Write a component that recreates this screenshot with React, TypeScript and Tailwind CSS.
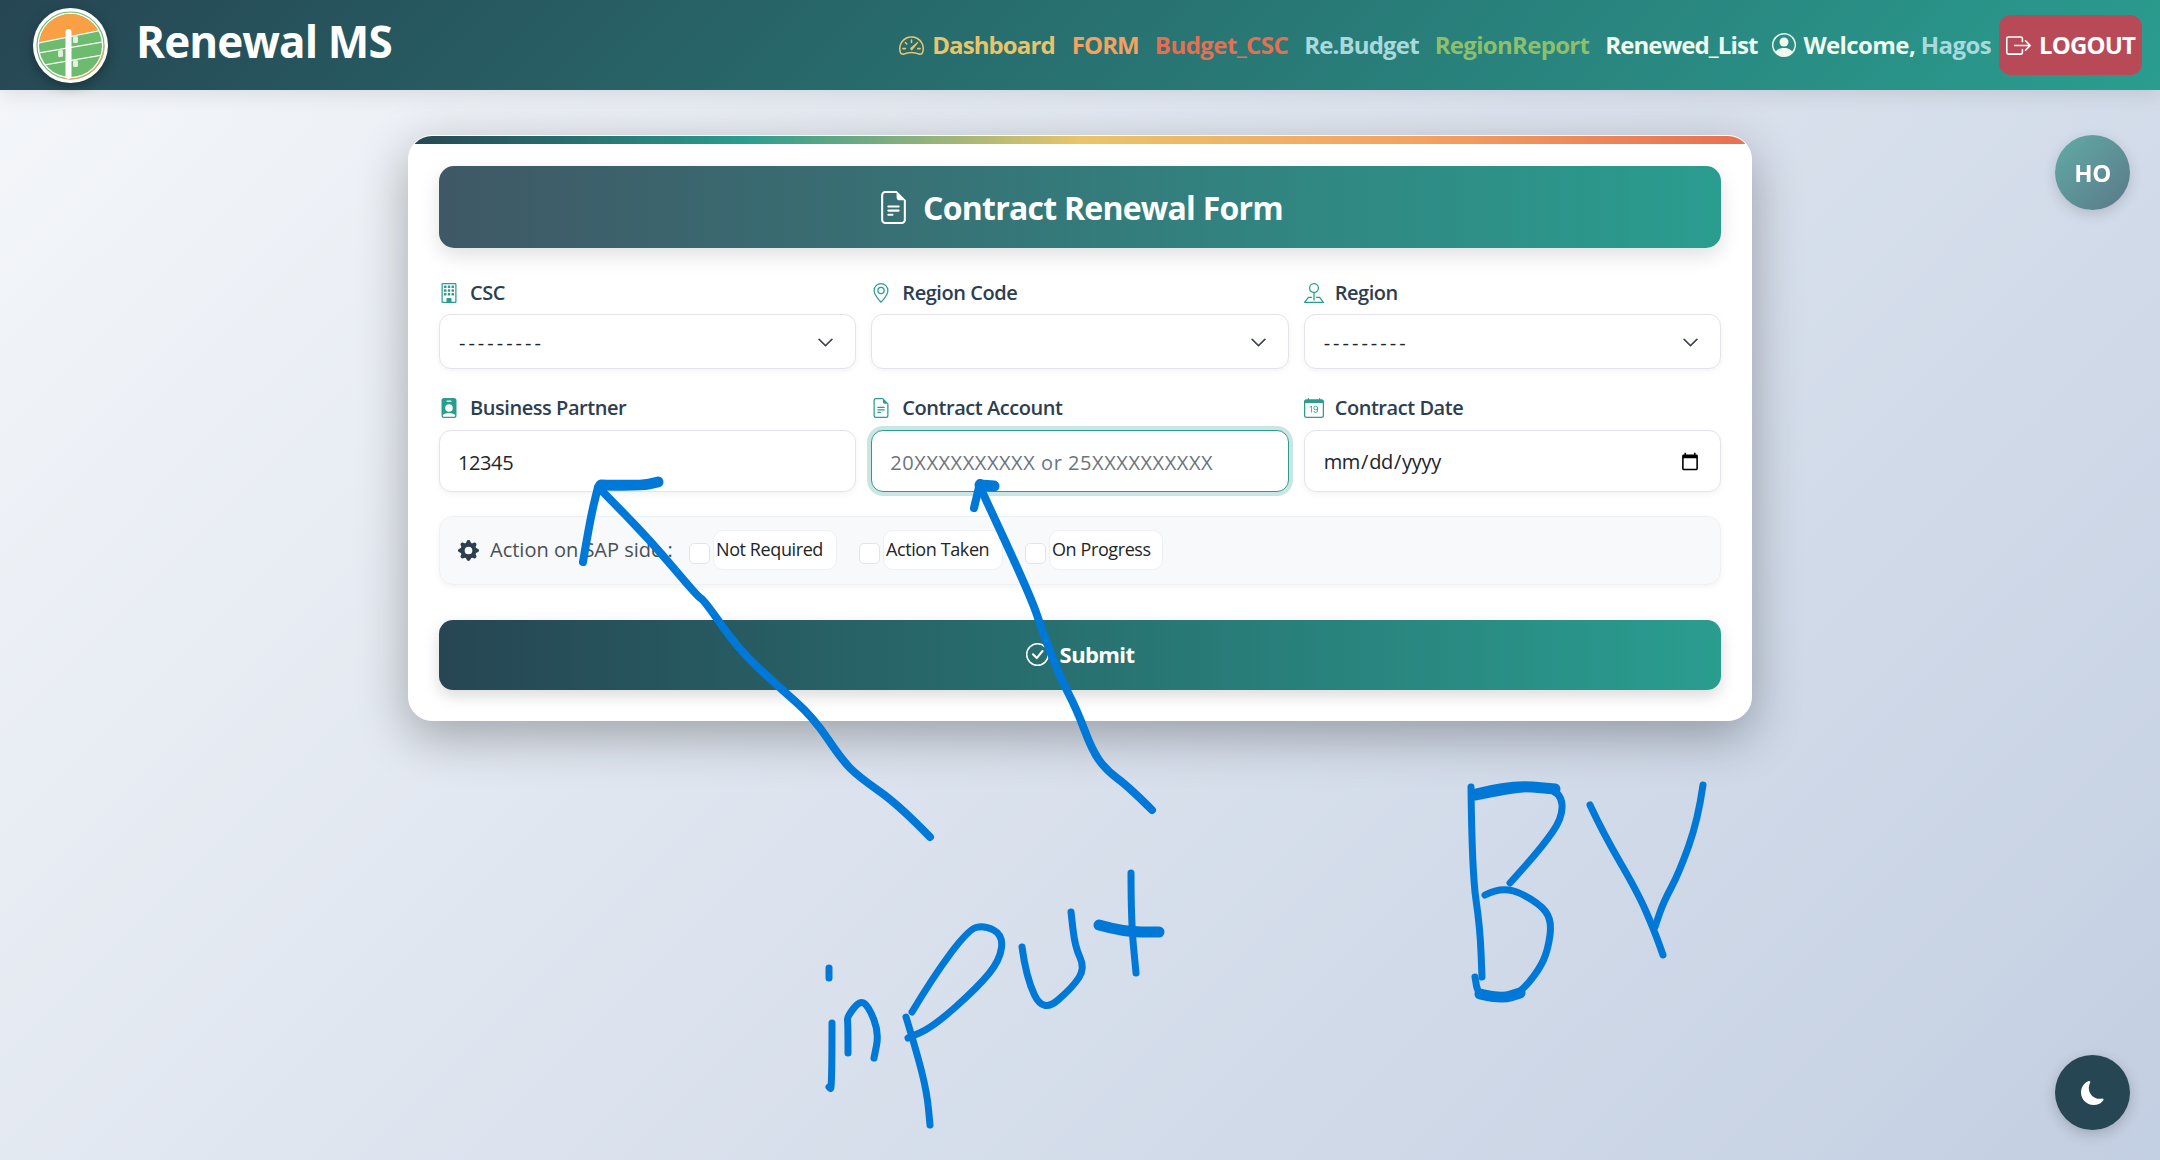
import {
  BsBoxArrowRight,
  BsBuilding,
  BsCalendarDate,
  BsCheckCircle,
  BsChevronDown,
  BsFileEarmarkText,
  BsGearFill,
  BsGeoAlt,
  BsMoonFill,
  BsPersonBadgeFill,
  BsPersonCircle,
  BsPinMap,
  BsSpeedometer2,
} from "react-icons/bs";

type Point = [number, number];

// Marker strokes scribbled over the screenshot, in page pixels.
const thickStrokes: Point[][] = [
  [[930, 837], [899, 805], [859, 777], [842, 760], [813, 717], [779, 687], [739, 650], [704, 600], [698, 597], [650, 540], [601, 490]],
  [[583, 562], [590, 520], [598, 487]],
  [[1152, 810], [1129, 787], [1106, 770], [1092, 750], [1077, 710], [1060, 677], [1043, 633], [1031, 597], [980, 487]],
  [[974, 508], [980, 483]],
];

const headStrokes: Point[][] = [
  [[601, 485], [640, 486], [658, 482]],
  [[980, 485], [994, 486]],
  [[1099, 925], [1124, 932], [1159, 932]],
  [[1476, 794], [1510, 785], [1555, 789]],
  [[1480, 994], [1501, 999], [1520, 993]],
];

const thinStrokes: Point[][] = [
  [[829, 968], [829, 978]],
  [[832, 1023], [832, 1090], [829, 1087]],
  [[848, 1053], [848, 1023], [847, 1017], [860, 1000], [869, 1007], [879, 1033], [874, 1058]],
  [[906, 1017], [917, 1053], [927, 1093], [930, 1125]],
  [[912, 1012], [933, 977], [968, 930], [984, 925], [1003, 935], [1000, 960], [978, 987], [933, 1027], [908, 1038]],
  [[1022, 947], [1026, 977], [1043, 1013], [1073, 987], [1085, 968], [1075, 947], [1071, 912]],
  [[1131, 873], [1131, 920], [1136, 973]],
  [[1471, 787], [1472, 873], [1480, 927], [1482, 977]],
  [[1475, 797], [1533, 785], [1561, 792], [1563, 817], [1542, 847], [1510, 883]],
  [[1485, 895], [1504, 885], [1539, 903], [1552, 920], [1548, 950], [1539, 970], [1520, 993], [1501, 1000], [1478, 995], [1475, 977]],
  [[1590, 805], [1603, 833], [1638, 893], [1654, 930], [1663, 955]],
  [[1703, 785], [1698, 820], [1679, 873], [1663, 903], [1655, 927]],
];

/** Quadratic segments through the midpoints, so the marker lines stay round. */
function smoothPath(points: Point[]) {
  let d = `M${points[0][0]} ${points[0][1]}`;
  for (let i = 1; i < points.length - 1; i++) {
    const [x, y] = points[i];
    const [nx, ny] = points[i + 1];
    d += ` Q${x} ${y} ${(x + nx) / 2} ${(y + ny) / 2}`;
  }
  const last = points[points.length - 1];
  return `${d} L${last[0]} ${last[1]}`;
}

function Scribbles() {
  const groups: [Point[][], number][] = [
    [thickStrokes, 8],
    [headStrokes, 11],
    [thinStrokes, 7],
  ];
  return (
    <svg
      className="absolute left-0 top-0 z-20 pointer-events-none"
      width="2160"
      height="1160"
      fill="none"
      stroke="#0078d7"
      strokeLinecap="round"
      strokeLinejoin="round"
    >
      {groups.map(([strokes, width]) =>
        strokes.map((s, i) => <path key={`${width}-${i}`} d={smoothPath(s)} strokeWidth={width} />)
      )}
    </svg>
  );
}

function Logo() {
  return (
    <svg width="75" height="75" viewBox="0 0 75 75" className="shrink-0 drop-shadow-[0_4px_6px_rgba(0,0,0,0.3)]">
      <circle cx="37.5" cy="37.5" r="37.5" fill="#fff" />
      <circle cx="37.5" cy="37.5" r="33.5" fill="#fff" stroke="#6dbb6e" strokeWidth="1.2" />
      <path d="M71 37.5 A33.5 33.5 0 0 1 30 70" fill="none" stroke="#e6a75c" strokeWidth="1.2" />
      <clipPath id="logo-disc">
        <circle cx="37.5" cy="37.5" r="31.5" />
      </clipPath>
      <g clipPath="url(#logo-disc)">
        <rect width="75" height="75" fill="#6dbb6e" />
        <path d="M0 36 L75 20 V0 H0 Z" fill="#f8a043" />
        <path d="M5 35 L70 22 M5 45 L70 34 M5 58 L70 47" stroke="#fff" strokeWidth="1.2" />
      </g>
      <rect x="32.5" y="21" width="6" height="50" rx="3" fill="#fff" />
      <rect x="40" y="28" width="5" height="7" rx="1.5" fill="#e4efe2" />
      <rect x="25" y="42" width="5" height="7" rx="1.5" fill="#e4efe2" />
      <rect x="40" y="52" width="5" height="7" rx="1.5" fill="#e4efe2" />
    </svg>
  );
}

function Navbar() {
  return (
    <nav className="flex h-[90px] items-center justify-between bg-[linear-gradient(135deg,#264653,#2a9d8f)] pl-[33px] pr-[18px] shadow-[0_4px_20px_rgba(0,0,0,0.1)]">
      <div className="flex items-center gap-[28px]">
        <Logo />
        <span className="-mt-[8px] text-[44px] font-bold leading-none tracking-[-0.9px] text-white">Renewal MS</span>
      </div>
      <div className="flex items-center text-[24px] font-bold tracking-[-0.9px]">
        <BsSpeedometer2 className="mr-[8px] text-[25px] text-[#e9c46a]" />
        <a className="mr-[17px] text-[#e9c46a]">Dashboard</a>
        <a className="mr-[16px] text-[#f4a261]">FORM</a>
        <a className="mr-[16px] tracking-[-0.55px] text-[#e76f51]">Budget_CSC</a>
        <a className="mr-[16px] tracking-[-0.85px] text-[#a8dadc]">Re.Budget</a>
        <a className="mr-[16px] tracking-[-0.7px] text-[#8ebf6c]">RegionReport</a>
        <a className="mr-[15px] text-[#f1faee]">Renewed_List</a>
        <BsPersonCircle className="mr-[7px] text-[24px] text-[#f1faee]" />
        <span className="mr-[8px] tracking-[-0.6px] text-[#f1faee]">
          Welcome, <span className="text-[#a8dadc]">Hagos</span>
        </span>
        <button
          type="button"
          className="flex h-[60px] w-[143px] items-center justify-center gap-[8px] rounded-[12px] bg-[#b84a57] font-bold text-white"
        >
          <BsBoxArrowRight className="text-[25px]" />
          LOGOUT
        </button>
      </div>
    </nav>
  );
}

function FieldLabel({ icon, text }: { icon: React.ReactNode; text: string }) {
  return (
    <label className="mb-[6px] flex h-[30px] items-center gap-[11px] text-[20px] font-semibold tracking-[-0.45px] text-[#2c3e50]">
      <span className="flex w-[20px] justify-center text-[20px] text-[#2a9d8f]">{icon}</span>
      {text}
    </label>
  );
}

function SelectField({ icon, label, value }: { icon: React.ReactNode; label: string; value: string }) {
  return (
    <div>
      <FieldLabel icon={icon} text={label} />
      <div className="relative">
        <select
          defaultValue={value}
          className="h-[55px] w-full appearance-none rounded-[12px] border border-[#e2e4e9] bg-white pl-[19px] pt-[3px] text-[20px] tracking-[3px] text-[#212529] shadow-[0_2px_6px_rgba(0,0,0,0.05)]"
        >
          <option value={value}>{value}</option>
        </select>
        <BsChevronDown className="pointer-events-none absolute right-[22px] top-[20px] stroke-[0.6px] text-[17px] text-[#343a40]" />
      </div>
    </div>
  );
}

function CheckOption({ text, width }: { text: string; width: string }) {
  return (
    <div className="mr-[22px] flex items-center gap-[3px]">
      <input
        type="checkbox"
        className="mt-[8px] h-[21px] w-[21px] appearance-none rounded-[5px] border border-[#e2e4e9] bg-white"
      />
      <span
        className={`${width} flex h-[40px] items-center rounded-[10px] border border-[#eef0f3] bg-white pl-[2px] text-[18px] tracking-[-0.4px] text-[#212529]`}
      >
        {text}
      </span>
    </div>
  );
}

function ContractForm() {
  return (
    <div className="w-[1344px] overflow-hidden rounded-[24px] border border-white bg-white pb-[30px] shadow-[0_15px_50px_rgba(0,0,0,0.3)]">
      <div className="h-[8px] bg-[linear-gradient(90deg,#264653,#2a9d8f,#e9c46a,#f4a261,#e76f51)]" />
      <div className="px-[30px] pt-[22px]">
        <div className="flex h-[82px] items-center justify-center gap-[13px] rounded-[15px] bg-[linear-gradient(90deg,#3f5866,#2a9d8f)] pt-[1px] text-[32px] font-bold tracking-[-0.75px] text-white shadow-[0_8px_20px_rgba(0,0,0,0.12)]">
          <BsFileEarmarkText className="text-[33px]" />
          Contract Renewal Form
        </div>

        <div className="mt-[30px] grid grid-cols-3 gap-x-[15px] gap-y-[24px]">
          <SelectField icon={<BsBuilding />} label="CSC" value="---------" />
          <SelectField icon={<BsGeoAlt />} label="Region Code" value="" />
          <SelectField icon={<BsPinMap />} label="Region" value="---------" />

          <div>
            <FieldLabel icon={<BsPersonBadgeFill />} text="Business Partner" />
            <input
              defaultValue="12345"
              className="mt-px h-[62px] w-full rounded-[12px] border border-[#e2e4e9] bg-white px-[18px] pt-[2px] text-[20px] tracking-[-0.4px] text-[#212529] shadow-[0_2px_6px_rgba(0,0,0,0.05)]"
            />
          </div>
          <div>
            <FieldLabel icon={<BsFileEarmarkText />} text="Contract Account" />
            <input
              placeholder="20XXXXXXXXXX or 25XXXXXXXXXX"
              className="mt-px h-[62px] w-full rounded-[12px] border border-[#2a9d8f] bg-white px-[18px] pt-[2px] text-[20px] tracking-[0.55px] text-[#212529] shadow-[0_0_0_4px_rgba(42,157,143,0.25)] outline-none placeholder:text-[#6c757d]"
            />
          </div>
          <div>
            <FieldLabel icon={<BsCalendarDate />} text="Contract Date" />
            <input
              type="date"
              className="mt-px h-[62px] w-full rounded-[12px] border border-[#e2e4e9] bg-white px-[18px] pt-[2px] text-[20px] tracking-[-0.3px] text-[#212529] shadow-[0_2px_6px_rgba(0,0,0,0.05)]"
            />
          </div>
        </div>

        <div className="mt-[24px] flex h-[69px] items-center rounded-[14px] border border-[#eef1f4] bg-[#f8f9fa] pb-[2px] pl-[18px] shadow-[0_2px_6px_rgba(0,0,0,0.05)]">
          <BsGearFill className="mt-[2px] text-[21px] text-[#2c3e50]" />
          <span className="ml-[11px] mr-[17px] w-[182px] whitespace-nowrap text-[20px] text-[#495057]">
            Action on SAP side :
          </span>
          <CheckOption text="Not Required" width="w-[124px]" />
          <CheckOption text="Action Taken" width="w-[120px]" />
          <CheckOption text="On Progress" width="w-[114px]" />
        </div>

        <button
          type="button"
          className="mt-[35px] flex h-[70px] w-full items-center justify-center gap-[11px] rounded-[14px] bg-[linear-gradient(90deg,#264653,#2a9d8f)] pb-[2px] text-[22px] font-bold tracking-[-0.6px] text-white shadow-[0_6px_16px_rgba(0,0,0,0.15)]"
        >
          <BsCheckCircle className="text-[23px]" />
          Submit
        </button>
      </div>
    </div>
  );
}

export default function App() {
  return (
    <div className="relative h-[1160px] overflow-hidden bg-[linear-gradient(135deg,#f5f7fa,#c3cfe2)] font-['Open_Sans',sans-serif]">
      <Navbar />
      <main className="flex justify-center pt-[45px]">
        <ContractForm />
      </main>

      <div className="fixed left-[2055px] top-[135px] z-10 flex h-[75px] w-[75px] items-center justify-center rounded-full bg-[linear-gradient(135deg,#62aca6,#5a7888)] text-[24px] font-bold tracking-[-0.5px] text-white shadow-[0_4px_14px_rgba(0,0,0,0.15)]">
        HO
      </div>
      <button
        type="button"
        className="fixed left-[2055px] top-[1055px] z-10 flex h-[75px] w-[75px] items-center justify-center rounded-full bg-[#264653] text-[24px] text-white shadow-[0_4px_14px_rgba(0,0,0,0.2)]"
      >
        <BsMoonFill />
      </button>

      <Scribbles />
    </div>
  );
}
